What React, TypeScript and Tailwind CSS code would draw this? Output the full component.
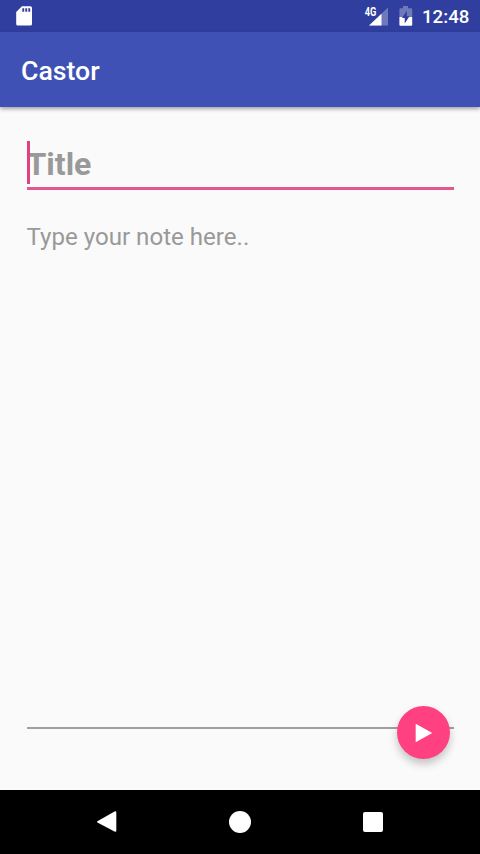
function StatusBar() {
  return (
    <div className="flex h-8 shrink-0 items-center bg-[#303f9f] pl-4 pr-[9px] text-white">
      <svg width="16" height="20" viewBox="0 0 16 20" aria-label="SD card">
        <path
          fill="currentColor"
          fillRule="evenodd"
          d="M6 .3h8.4A1.6 1.6 0 0 1 16 1.900V18a1.600 1.600 0 0 1-1.600 1.600H1.800A1.600 1.600 0 0 1 .2 18V6zM6.300 2.300v3.400h1.900V2.300zm3 0v3.400h1.900V2.300zm3 0v3.400h1.900V2.300z"
        />
      </svg>
      <svg className="ml-auto" width="25" height="22" viewBox="0 0 25 22" aria-label="Mobile signal">
        <path fill="#fff" fillOpacity=".3" d="M24 2.600V20.500H5z" />
        <path fill="#fff" d="M17.500 8.700V20.500H5z" />
        <path fill="#303f9f" d="M0 0H13.500V12.500H0z" />
        <g transform="translate(.8 10.800) scale(.8 1)">
          <text fill="#fff" fontSize="12" fontWeight="700" fontFamily="Roboto, sans-serif" textLength="14.500" lengthAdjust="spacingAndGlyphs">
            4G
          </text>
        </g>
      </svg>
      <svg className="ml-[10px]" width="14" height="22" viewBox="0 0 14 22" aria-label="Battery charging">
        <path fill="#fff" fillOpacity=".3" d="M4 1h5v2.200h3.200a1 1 0 0 1 1 1V12H.400V4.200a1 1 0 0 1 1-1H4z" />
        <path fill="#fff" d="M.400 12h12.800v7.800a1 1 0 0 1-1 1H1.400a1 1 0 0 1-1-1z" />
        <path fill="#303f9f" d="M7.800 5.800v5.400h2.700L5.700 18.500V13H3z" />
      </svg>
      <span className="ml-[9px] w-[49px] whitespace-nowrap pt-px text-[18.67px] font-medium leading-8">12:48</span>
    </div>
  );
}

function NavigationBar() {
  return (
    <nav className="flex h-16 shrink-0 items-center justify-between bg-black px-24 text-white">
      <button className="flex" aria-label="Back">
        <svg width="22" height="24" viewBox="0 0 22 24" fill="currentColor">
          <path d="M1.400 11.200 18.500 1.400Q20.300.600 20.300 2.400V20.400Q20.300 22.200 18.500 21.400L1.400 12.500Q.500 11.800 1.400 11.200Z" />
        </svg>
      </button>
      <button className="size-[22px] rounded-full bg-white" aria-label="Home" />
      <button className="flex size-[22px] items-center justify-center" aria-label="Overview">
        <span className="size-5 rounded-[2px] bg-white" />
      </button>
    </nav>
  );
}

export default function App() {
  return (
    <div className="flex h-[854px] w-[480px] flex-col overflow-hidden bg-[#fafafa] font-['Roboto',sans-serif]">
      <StatusBar />
      <header className="flex h-[75px] shrink-0 items-center bg-[#3f51b5] px-[21px] pt-[2px] shadow-[0_2px_4px_rgba(0,0,0,0.35)]">
        <h1 className="text-[26.67px] font-medium leading-8 text-white">Castor</h1>
      </header>
      <main className="relative flex min-h-0 grow flex-col px-[26.500px] pt-[34px]">
        <div className="relative flex h-[49px] shrink-0 items-center border-b-[3px] border-[#e3588c] text-[32px] font-bold leading-[44px] text-[#999]">
          Title
          <span className="absolute left-0 top-0 h-[43px] w-[3px] bg-[#e0427d]" />
        </div>
        <div className="mt-[32px] h-[507px] shrink-0 border-b-2 border-[#a0a0a0] pt-px text-[24.100px] leading-[28px] text-[#999]">
          Type your note here..
        </div>
        <button
          className="absolute bottom-[31px] right-[30px] flex size-[53px] items-center justify-center rounded-full bg-[#ff4081] text-white shadow-[0_5px_8px_rgba(0,0,0,0.22)]"
          aria-label="Send"
        >
          <svg width="18" height="20" viewBox="0 0 18 20" fill="currentColor">
            <path d="M.700.800 17.200 10 .700 19.200z" />
          </svg>
        </button>
      </main>
      <NavigationBar />
    </div>
  );
}
